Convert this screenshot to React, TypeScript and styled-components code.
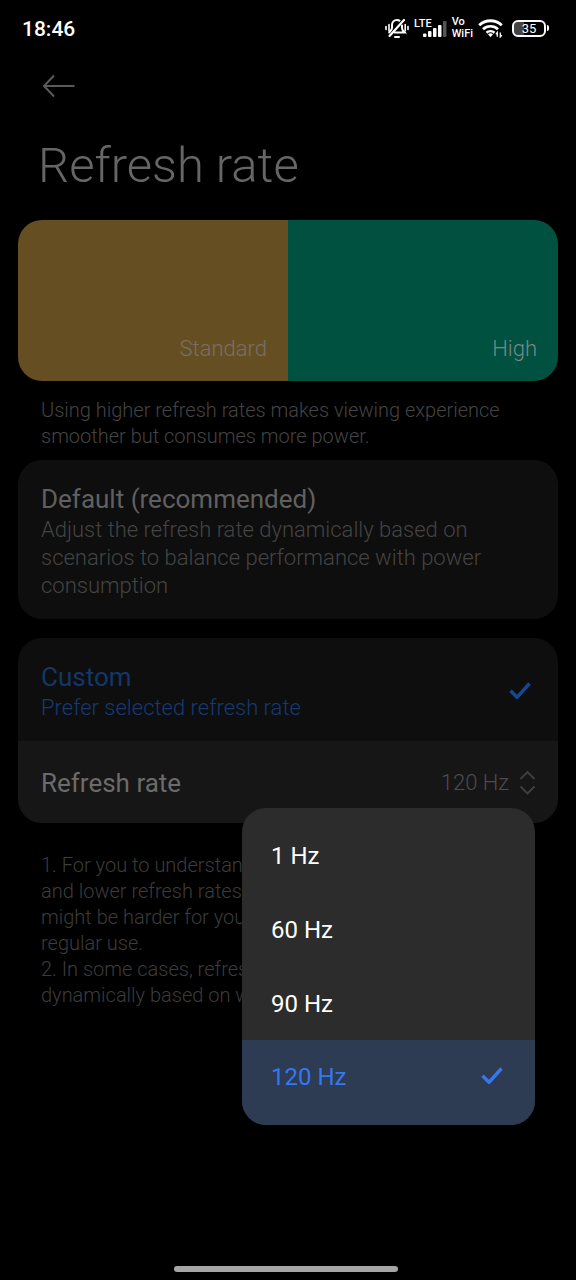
import React, { useState } from "react";
import styled, { createGlobalStyle, css } from "styled-components";

const GlobalStyle = createGlobalStyle`
  *, *::before, *::after { box-sizing: border-box; }
  html, body { margin: 0; background: #000; }
  body { font-family: Roboto, "Noto Sans", sans-serif; color: #6a6a6a; }
  button, input { font: inherit; color: inherit; }
`;

const Screen = styled.div`
  display: flex;
  flex-direction: column;
  min-height: 100vh;
  background: #000;
`;

const StatusBar = styled.header`
  display: flex;
  align-items: center;
  justify-content: space-between;
  height: 56px;
  padding: 0 27px 0 22px;
  color: #fff;
`;

const Clock = styled.time`
  padding-top: 2px;
  font-size: 21px;
  line-height: 28px;
  font-weight: 500;
`;

const StatusIcons = styled.div`
  display: flex;
  align-items: center;
  gap: 5px;

  svg { display: block; }
`;

const Signal = styled.div`
  display: flex;
  align-items: flex-end;
  height: 18px;
`;

const NetworkType = styled.span`
  align-self: flex-start;
  font-size: 11px;
  line-height: 9px;
  font-weight: 500;
  margin-right: -9px;
`;

const VoWifi = styled.span`
  display: flex;
  flex-direction: column;
  font-size: 11px;
  line-height: 12px;
  font-weight: 500;
`;

const Battery = styled.div`
  display: flex;
  align-items: center;
  gap: 1px;
  margin-left: 3px;

  &::after {
    content: "";
    width: 2px;
    height: 6px;
    border-radius: 0 2px 2px 0;
    background: #fff;
  }
`;

const BatteryLevel = styled.span`
  width: 34px;
  height: 17px;
  border: 2px solid #fff;
  border-radius: 6px;
  background: linear-gradient(90deg, #444 35%, #000 35%);
  font-size: 13px;
  line-height: 13px;
  font-weight: 400;
  text-align: center;
`;

const Content = styled.main`
  flex: 1;
  padding: 0 18px;
`;

const BackButton = styled.button`
  display: block;
  margin: 12px 0 0 22px;
  padding: 0;
  border: 0;
  background: none;
  color: #5a5a5a;

  svg { display: block; }
`;

const Title = styled.h1`
  margin: 32px 20px 24px;
  font-size: 49px;
  line-height: 60px;
  font-weight: 300;
  color: #666;
`;

const Preview = styled.div`
  display: grid;
  grid-template-columns: 1fr 1fr;
  height: 161px;
  border-radius: 24px;
  overflow: hidden;
`;

const PreviewHalf = styled.div<{ $tone: "standard" | "high" }>`
  display: flex;
  align-items: flex-end;
  justify-content: flex-end;
  padding: 18px 21px;
  font-size: 22px;
  line-height: 28px;
  font-weight: 300;
  ${({ $tone }) =>
    $tone === "standard"
      ? css`background: #664e23; color: #777066;`
      : css`background: #00513f; color: #788883;`}
`;

const Caption = styled.p`
  margin: 16px 23px 11px;
  font-size: 20px;
  line-height: 26px;
  font-weight: 300;
  color: #444;
`;

const Card = styled.section`
  position: relative;
  border-radius: 24px;
  background: #0e0e0e;

  & + & { margin-top: 19px; }
`;

const Option = styled.label`
  display: flex;
  align-items: center;
  justify-content: space-between;
  padding: 23px 26px 19px 23px;
`;

const HiddenRadio = styled.input`
  position: absolute;
  width: 1px;
  height: 1px;
  margin: 0;
  opacity: 0;
`;

const OptionText = styled.span`
  display: flex;
  flex-direction: column;
  max-width: 450px;
`;

const OptionTitle = styled.span<{ $selected?: boolean }>`
  font-size: 26px;
  line-height: 33px;
  font-weight: 400;
  color: ${({ $selected }) => ($selected ? "#143668" : "#606060")};
`;

const OptionDetail = styled.span<{ $selected?: boolean }>`
  font-size: 22px;
  line-height: 28px;
  font-weight: 300;
  color: ${({ $selected }) => ($selected ? "#153a72" : "#444")};
`;

const RateRow = styled.button`
  display: flex;
  align-items: center;
  justify-content: space-between;
  width: 100%;
  height: 82px;
  padding: 2px 22px 0 23px;
  border: 0;
  border-radius: 0 0 24px 24px;
  background: #161616;
`;

const RateName = styled.span`
  font-size: 26px;
  line-height: 34px;
  color: #6b6b6b;
`;

const RateValue = styled.span`
  display: flex;
  align-items: center;
  gap: 10px;
  font-size: 22px;
  line-height: 28px;
  font-weight: 300;
  color: #4c4c4c;
`;

const Menu = styled.div`
  position: absolute;
  right: 23px;
  bottom: -302px;
  width: 293px;
  padding-top: 10px;
  border-radius: 24px;
  overflow: hidden;
  background: #2c2c2c;
`;

const MenuItem = styled.button<{ $selected: boolean }>`
  display: flex;
  align-items: center;
  justify-content: space-between;
  width: 100%;
  height: 74px;
  padding: 2px 31px 0 29px;
  border: 0;
  background: ${({ $selected }) => ($selected ? "#2d3b53" : "transparent")};
  color: ${({ $selected }) => ($selected ? "#3478f0" : "#fff")};
  font-size: 24px;
  line-height: 32px;

  &:last-child {
    height: 85px;
    padding-bottom: 13px;
  }
`;

const Notes = styled.div`
  margin: 29px 23px 0;
  font-size: 20px;
  line-height: 26px;
  font-weight: 300;
  color: #3c3c3c;

  p { margin: 0; }
`;

const GestureArea = styled.footer`
  display: flex;
  justify-content: center;
  padding: 0 4px 8px 0;
`;

const GestureBar = styled.span`
  width: 39%;
  height: 6px;
  border-radius: 3px;
  background: #a6a6a6;
`;

function Check({ color }: { color: string }) {
  return (
    <svg width="24" height="20" viewBox="0 0 24 20" fill="none" aria-hidden="true">
      <path d="M2.500 8.700 9 15.300 21.500 1.500" stroke={color} strokeWidth="3.400" strokeLinejoin="round" />
    </svg>
  );
}

function MutedBell() {
  return (
    <svg width="24" height="22" viewBox="0 0 24 22" fill="none" stroke="#fff" strokeLinecap="round" aria-label="Muted">
      <path d="M17 8.500v2.500c0 2 1.200 3.200 2.600 4.500H9.500M14.500 3.600C13.800 3.200 13 3 12 3 9 3 7 5.200 7 8v3c0 1.500-1.200 2.900-2.800 4.500" strokeWidth="2" />
      <path d="M4.500 19 19 3" strokeWidth="2.200" />
      <path d="M10 20h4" strokeWidth="2" />
      <path d="M1 9.500v3M4 7.500v6.500M20.200 7.500v6.500M23 9.500v3" strokeWidth="1.600" />
    </svg>
  );
}

function SignalBars() {
  return (
    <svg width="24" height="16" viewBox="0 0 24 16" fill="#fff" aria-label="Signal">
      <rect x="0" y="12.500" width="3.500" height="3.500" rx="1" />
      <rect x="5" y="10" width="3.500" height="6" rx="1" />
      <rect x="10" y="7" width="3.500" height="9" rx="1" />
      <rect x="15" y="4" width="3.500" height="12" rx="1" />
      <rect x="20" y="0" width="3.500" height="16" rx="1" fill="#555" />
    </svg>
  );
}

function Wifi() {
  return (
    <svg width="26" height="20" viewBox="0 0 26 20" fill="none" stroke="#fff" aria-label="Wi-Fi">
      <path d="M1.200 7.200a16.500 16.500 0 0 1 22.600 0" strokeWidth="2.900" />
      <path d="M5 11.200a11 11 0 0 1 15 0" strokeWidth="2.700" />
      <path d="M8.500 14.800a6 6 0 0 1 8 0" strokeWidth="2.600" />
      <path d="M10 16.300 12.500 19.200l2.500-2.900a3.800 3.800 0 0 0-5 0z" fill="#fff" stroke="none" />
      <path d="M19.300 18.800v-4.300l-1.400 1.600M22.300 14.500v4.300l1.500-1.600" strokeWidth="1.300" />
    </svg>
  );
}

const RATES = ["1 Hz", "60 Hz", "90 Hz", "120 Hz"];

export default function App() {
  const [mode, setMode] = useState("custom");
  const [rate, setRate] = useState("120 Hz");
  const [open, setOpen] = useState(true);

  return (
    <Screen>
      <GlobalStyle />
      <StatusBar>
        <Clock>18:46</Clock>
        <StatusIcons>
          <MutedBell />
          <Signal>
            <NetworkType>LTE</NetworkType>
            <SignalBars />
          </Signal>
          <VoWifi>
            <span>Vo</span>
            <span>WiFi</span>
          </VoWifi>
          <Wifi />
          <Battery>
            <BatteryLevel>35</BatteryLevel>
          </Battery>
        </StatusIcons>
      </StatusBar>

      <Content>
        <BackButton aria-label="Back">
          <svg width="36" height="36" viewBox="0 0 36 36" fill="none" stroke="currentColor" strokeWidth="2" aria-hidden="true">
            <path d="M34.500 18H4.500M14 7.500 4 18l10 10.500" />
          </svg>
        </BackButton>
        <Title>Refresh rate</Title>

        <Preview>
          <PreviewHalf $tone="standard">Standard</PreviewHalf>
          <PreviewHalf $tone="high">High</PreviewHalf>
        </Preview>
        <Caption>
          Using higher refresh rates makes viewing experience smoother but consumes more power.
        </Caption>

        <Card>
          <Option>
            <HiddenRadio type="radio" name="mode" checked={mode === "default"} onChange={() => setMode("default")} />
            <OptionText>
              <OptionTitle $selected={mode === "default"}>Default (recommended)</OptionTitle>
              <OptionDetail $selected={mode === "default"}>
                Adjust the refresh rate dynamically based on scenarios to balance performance with power consumption
              </OptionDetail>
            </OptionText>
            {mode === "default" && <Check color="#124a90" />}
          </Option>
        </Card>

        <Card>
          <Option>
            <HiddenRadio type="radio" name="mode" checked={mode === "custom"} onChange={() => setMode("custom")} />
            <OptionText>
              <OptionTitle $selected={mode === "custom"}>Custom</OptionTitle>
              <OptionDetail $selected={mode === "custom"}>Prefer selected refresh rate</OptionDetail>
            </OptionText>
            {mode === "custom" && <Check color="#124a90" />}
          </Option>
          <RateRow aria-haspopup="menu" aria-expanded={open} onClick={() => setOpen(!open)}>
            <RateName>Refresh rate</RateName>
            <RateValue>
              {rate}
              <svg width="17" height="26" viewBox="0 0 17 26" fill="none" stroke="#404040" strokeWidth="1.800" aria-hidden="true">
                <path d="M1.500 9l7-7 7 7M1.500 16.500l7 7 7-7" />
              </svg>
            </RateValue>
          </RateRow>
          {open && (
            <Menu role="menu">
              {RATES.map((item) => (
                <MenuItem
                  key={item}
                  role="menuitemradio"
                  aria-checked={item === rate}
                  $selected={item === rate}
                  onClick={() => {
                    setRate(item);
                    setOpen(false);
                  }}
                >
                  {item}
                  {item === rate && <Check color="#3478f0" />}
                </MenuItem>
              ))}
            </Menu>
          )}
        </Card>

        <Notes>
          <p>
            1. For you to understand
            <br />
            and lower refresh rates
            <br />
            might be harder for you
            <br />
            regular use.
          </p>
          <p>
            2. In some cases, refresh
            <br />
            dynamically based on w
          </p>
        </Notes>
      </Content>

      <GestureArea>
        <GestureBar />
      </GestureArea>
    </Screen>
  );
}
